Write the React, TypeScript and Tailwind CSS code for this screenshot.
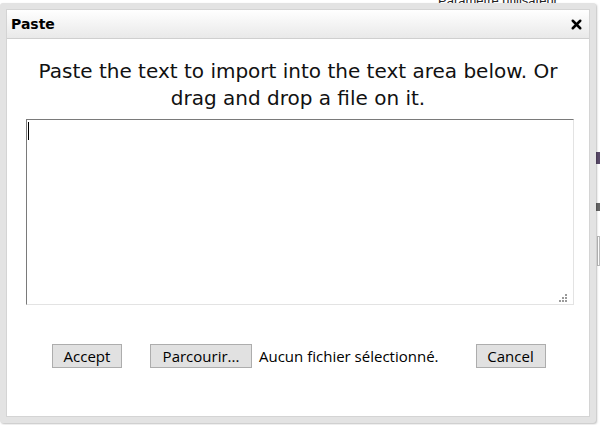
import { X } from 'lucide-react';

// 粘贴导入对话框：灰色外框 + 标题栏 + 文本区 + 底部按钮
export default function App() {
  return (
    <div className="relative w-[600px] h-[425px] overflow-hidden bg-white font-['DejaVu_Sans',sans-serif]">
      {/* 背后页面的零碎内容 */}
      <div className="absolute top-[-9px] left-[438px] text-[13px] text-[#222] font-['Liberation_Sans',sans-serif]">
        Paramètre utilisateur
      </div>
      <div className="absolute top-[152px] left-[596px] w-[4px] h-[12px] bg-[#5a4a6a]" />
      <div className="absolute top-[203px] left-[596px] w-[4px] h-[8px] bg-[#666]" />
      <div className="absolute top-[236px] left-[597px] w-[3px] h-[30px] border border-[#bbb]" />

      {/* 对话框 */}
      <div className="relative mt-[3px] w-[596px] h-[420px] rounded-[3px] bg-[#e3e3e3] p-[6px] shadow-[1px_1px_2px_rgba(0,0,0,0.25)]">
        <div className="flex flex-col h-full bg-white border border-[#d4d4d4]">
          {/* 标题栏 */}
          <div className="flex items-center justify-between h-[29px] px-[4px] bg-gradient-to-b from-white to-[#e9e9e9] border-b border-[#cfcfcf]">
            <span className="text-[14px] font-bold text-black">Paste</span>
            <X className="w-[15px] h-[15px] mr-[1px] text-black" strokeWidth={4} />
          </div>

          <p className="mt-[19px] px-[10px] text-center text-[20px] leading-[27px] text-[#111]">
            Paste the text to import into the text area below. Or drag and drop a file on it.
          </p>

          {/* 文本区 */}
          <div className="relative mx-[19px] mt-[7px]">
            <textarea className="block w-[548px] h-[186px] resize-none border border-t-[#7a7a7a] border-l-[#7a7a7a] border-r-[#e3e3e3] border-b-[#e3e3e3] bg-white outline-none" />
            <div className="absolute left-[2px] top-[3px] w-[1px] h-[18px] bg-black" />
            <svg className="absolute right-[3px] bottom-[3px]" width="8" height="8" viewBox="0 0 8 8">
              <g fill="#9a9a9a">
                <rect x="6" y="0" width="2" height="2" />
                <rect x="3" y="3" width="2" height="2" />
                <rect x="6" y="3" width="2" height="2" />
                <rect x="0" y="6" width="2" height="2" />
                <rect x="3" y="6" width="2" height="2" />
                <rect x="6" y="6" width="2" height="2" />
              </g>
            </svg>
          </div>

          {/* 底部按钮 */}
          <div className="flex items-center mt-[39px] pl-[45px] text-[15px] font-['Open_Sans',sans-serif] text-black">
            <button className="w-[70px] h-[24px] bg-[#e1e1e1] border border-[#adadad]">Accept</button>
            <button className="ml-[28px] w-[102px] h-[24px] bg-[#e1e1e1] border border-[#adadad]">Parcourir...</button>
            <span className="ml-[7px]">Aucun fichier sélectionné.</span>
            <button className="ml-[37px] w-[70px] h-[24px] bg-[#e1e1e1] border border-[#adadad]">Cancel</button>
          </div>
        </div>
      </div>
    </div>
  );
}
